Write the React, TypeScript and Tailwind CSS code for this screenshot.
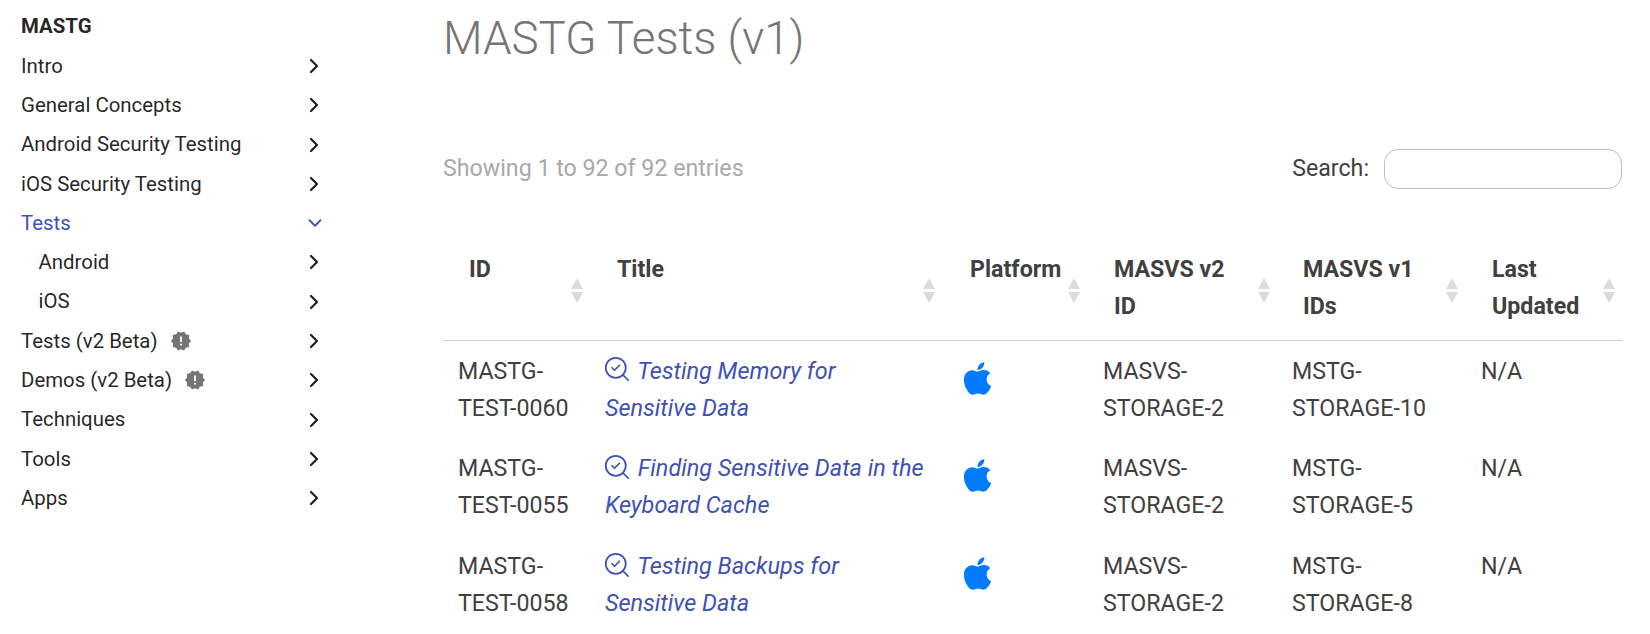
import { ChevronDown, ChevronRight, SearchCheck } from "lucide-react";
import { FaApple } from "react-icons/fa";

const Decagram = () => (
  <svg viewBox="0 0 24 24" className="ml-[12px] h-[22px] w-[22px] fill-[#757575]">
    <path d="M23,12L20.56,9.22L20.9,5.54L17.29,4.72L15.4,1.54L12,3L8.6,1.54L6.71,4.72L3.1,5.53L3.44,9.21L1,12L3.44,14.78L3.1,18.47L6.71,19.29L8.6,22.47L12,21L15.4,22.46L17.29,19.28L20.9,18.46L20.56,14.78L23,12M13,17H11V15H13V17M13,13H11V7H13V13Z" />
  </svg>
);

const nav = [
  { label: "Intro" },
  { label: "General Concepts" },
  { label: "Android Security Testing" },
  { label: "iOS Security Testing" },
  { label: "Tests", active: true },
  { label: "Android", sub: true },
  { label: "iOS", sub: true },
  { label: "Tests (v2 Beta)", badge: true },
  { label: "Demos (v2 Beta)", badge: true },
  { label: "Techniques" },
  { label: "Tools" },
  { label: "Apps" },
];

const Sort = ({ right }: { right: string }) => (
  <span className={`absolute top-[60px] flex flex-col gap-[3px] ${right}`}>
    <span className="h-0 w-0 border-x-[6px] border-b-[11px] border-x-transparent border-b-[#dcdcdc]" />
    <span className="h-0 w-0 border-x-[6px] border-t-[11px] border-x-transparent border-t-[#dcdcdc]" />
  </span>
);

const rows = [
  ["MASTG-TEST-0060", "Testing Memory for Sensitive Data", "MASVS-STORAGE-2", "MSTG-STORAGE-10"],
  ["MASTG-TEST-0055", "Finding Sensitive Data in the Keyboard Cache", "MASVS-STORAGE-2", "MSTG-STORAGE-5"],
  ["MASTG-TEST-0058", "Testing Backups for Sensitive Data", "MASVS-STORAGE-2", "MSTG-STORAGE-8"],
];

const breakHyphen = (s: string) => {
  const i = s.indexOf("-");
  return (
    <>
      {s.slice(0, i + 1)}
      <br />
      {s.slice(i + 1)}
    </>
  );
};

export default function App() {
  return (
    <div className="flex h-[634px] w-[1650px] overflow-hidden bg-white font-['Roboto',sans-serif] text-[20.4px] text-[#000000de]">
      <aside className="w-[443px] shrink-0 pl-[21px] pt-[7px]">
        <div className="flex h-[39.3px] items-center font-bold">MASTG</div>
        {nav.map((n) => (
          <div
            key={n.label}
            className={`flex h-[39.3px] w-[305px] items-center justify-between ${n.active ? "text-[#3f51b5]" : ""} ${n.sub ? "pl-[17.5px]" : ""}`}
          >
            <span className="flex items-center">
              {n.label}
              {n.badge && <Decagram />}
            </span>
            {n.active ? (
              <ChevronDown size={22} strokeWidth={2} className="text-[#3f51b5]" />
            ) : (
              <ChevronRight size={24} strokeWidth={2.2} className="text-[#1f1f1f]" />
            )}
          </div>
        ))}
      </aside>

      <main className="w-[1179px] shrink-0 text-[23.2px] text-[#404040]">
        <h1 className="pt-[6px] text-[45.7px] font-light leading-[66px] text-[#757575]">MASTG Tests (v1)</h1>
        <div className="mt-[76px] flex h-[40px] items-center justify-between">
          <div className="text-[#a9a9a9]">Showing 1 to 92 of 92 entries</div>
          <label className="flex items-center gap-[15px]">
            Search:
            <input className="mt-[2px] h-[40px] w-[238px] rounded-[14px] border border-[#bdbdbd] bg-white" />
          </label>
        </div>
        <table className="mt-[30px] w-[1179px] table-fixed border-collapse text-left">
          <colgroup>
            <col className="w-[147px]" />
            <col className="w-[358px]" />
            <col className="w-[140px]" />
            <col className="w-[189px]" />
            <col className="w-[189px]" />
            <col className="w-[156px]" />
          </colgroup>
          <thead>
            <tr className="h-[122px] border-b border-[#cfcfcf] align-top font-bold leading-[37px]">
              <th className="relative pl-[26px] pt-[33px] font-bold">ID<Sort right="right-[7px]" /></th>
              <th className="relative pl-[27px] pt-[33px] font-bold">Title<Sort right="right-[13px]" /></th>
              <th className="relative pl-[22px] pt-[33px] font-bold">Platform<Sort right="right-[8px]" /></th>
              <th className="relative pl-[26px] pt-[33px] font-bold">MASVS v2<br />ID<Sort right="right-[7px]" /></th>
              <th className="relative pl-[26px] pt-[33px] font-bold">MASVS v1<br />IDs<Sort right="right-[8px]" /></th>
              <th className="relative pl-[26px] pt-[33px] font-bold">Last<br />Updated<Sort right="right-[7px]" /></th>
            </tr>
          </thead>
          <tbody>
            {rows.map((r) => (
              <tr key={r[0]} className="h-[98px] align-top leading-[37px]">
                <td className="pl-[15px] pt-[12px]">{breakHyphen(r[0])}</td>
                <td className="pl-[15px] pr-[18px] pt-[12px] text-[23.45px] italic text-[#3f51b5]">
                  <SearchCheck size={30} strokeWidth={1.4} className="-ml-[3px] inline-block -translate-y-[3px] align-middle" />
                  {" "}
                  {r[1]}
                </td>
                <td className="pl-[11px] pt-[12px]">
                  <FaApple size={37} className="mt-[7px] text-[#007aff]" />
                </td>
                <td className="pl-[15px] pt-[12px]">{breakHyphen(r[2])}</td>
                <td className="pl-[15px] pt-[12px]">{breakHyphen(r[3])}</td>
                <td className="pl-[15px] pt-[12px]">N/A</td>
              </tr>
            ))}
          </tbody>
        </table>
      </main>
    </div>
  );
}
